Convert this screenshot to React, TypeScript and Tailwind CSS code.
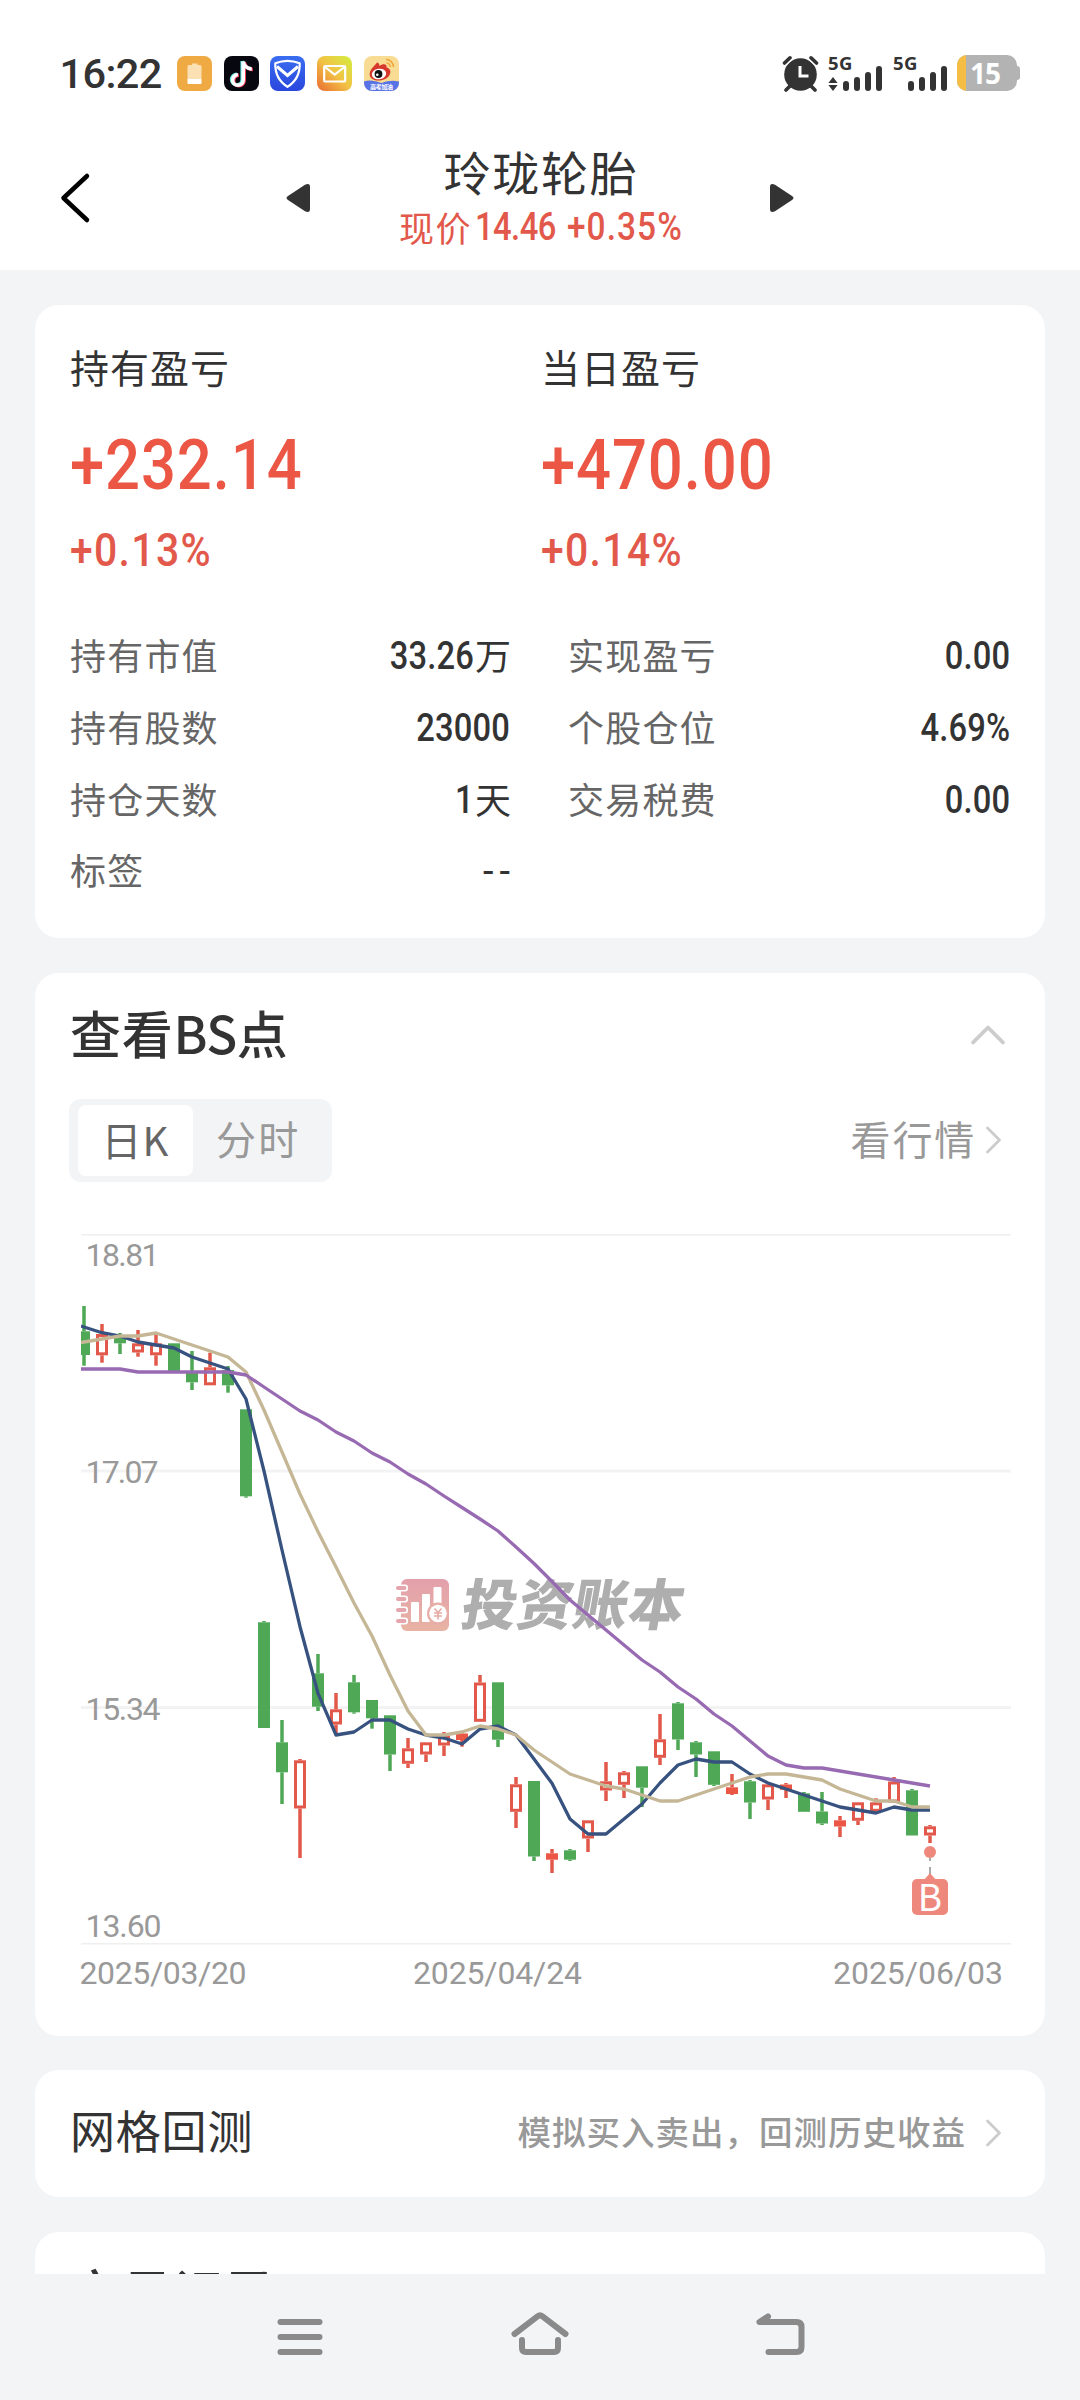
import React from "react";

type Candle = {
  up: boolean;
  filled?: boolean;
  high: number;
  top: number;
  bottom: number;
  low: number;
};

const G = (high: number, top: number, bottom: number, low: number): Candle => ({ up: false, high, top, bottom, low });
const R = (high: number, top: number, bottom: number, low: number): Candle => ({ up: true, high, top, bottom, low });
const F = (high: number, top: number, bottom: number, low: number): Candle => ({ up: true, filled: true, high, top, bottom, low });

const candles: Candle[] = [
  G(1306, 1331.3, 1355, 1365.7),
  R(1324, 1334, 1355.3, 1362.7),
  G(1333, 1336.5, 1343.3, 1354),
  R(1330, 1343.3, 1352.5, 1356.7),
  R(1334, 1343.3, 1355.3, 1365.7),
  G(1343.3, 1343.3, 1371.3, 1371.3),
  G(1351, 1372, 1382.3, 1390),
  R(1352.7, 1367.3, 1385.3, 1385.3),
  G(1366, 1370, 1385.3, 1392.7),
  G(1409.3, 1409.3, 1496.3, 1497.7),
  G(1621, 1622.3, 1728, 1728),
  G(1720, 1742.3, 1772.3, 1804),
  R(1759, 1760.3, 1808.5, 1858),
  G(1654, 1673.3, 1706.7, 1711),
  R(1693, 1709.3, 1724.5, 1733),
  G(1675, 1682.3, 1712.3, 1713.7),
  G(1700, 1700, 1718.3, 1728.7),
  G(1715.3, 1715.3, 1754.5, 1771),
  R(1738, 1748.3, 1763.8, 1768),
  R(1742.3, 1742.3, 1754.5, 1762),
  R(1732, 1735.3, 1745.5, 1756),
  F(1731.7, 1733.5, 1740, 1746.7),
  R(1675, 1682.5, 1721.8, 1721.8),
  G(1682.3, 1682.3, 1739.7, 1747),
  R(1777, 1784.3, 1811.8, 1828),
  G(1781, 1781, 1856.5, 1861),
  F(1849, 1853.3, 1859.7, 1873),
  G(1849, 1850.3, 1859.7, 1861),
  R(1820.3, 1820.3, 1838.5, 1852),
  R(1762, 1781.3, 1790.5, 1801),
  R(1771, 1772.3, 1784.8, 1798),
  G(1766.3, 1766.3, 1787.7, 1807),
  R(1714, 1739.3, 1757.8, 1765),
  G(1702, 1703.3, 1739.5, 1750),
  G(1741, 1742.3, 1754.5, 1777),
  G(1751.3, 1751.3, 1784.8, 1786),
  F(1774, 1787.3, 1794, 1795),
  G(1780, 1781.3, 1802.5, 1819),
  R(1784.3, 1784.3, 1799.5, 1810),
  F(1783, 1784.5, 1789.8, 1798),
  G(1792, 1793.3, 1811.8, 1811.8),
  G(1792, 1811.5, 1823.5, 1825),
  F(1816, 1820.3, 1826.5, 1837),
  R(1802.3, 1802.3, 1820.8, 1825),
  R(1798.3, 1802.3, 1811.8, 1811.8),
  R(1777, 1781.5, 1802.5, 1802.5),
  G(1789, 1790.3, 1835.5, 1835.5),
  R(1825, 1826.3, 1835.5, 1843),
];

const ma5 = [
  1327, 1332.7, 1336, 1342, 1345, 1348, 1357, 1363, 1369, 1399, 1471, 1550, 1626.7, 1693.3, 1735, 1732,
  1720, 1720, 1729, 1735, 1738, 1744, 1729, 1726, 1735, 1759, 1783.3, 1819, 1834, 1834, 1819, 1804, 1783,
  1765, 1759, 1762, 1762, 1774, 1783, 1789, 1795, 1801, 1807, 1810, 1813, 1807, 1810, 1810,
];
const ma10 = [
  1342, 1339, 1336, 1336, 1333, 1339, 1345, 1351, 1357, 1372, 1410, 1452, 1494, 1531.7, 1567, 1603, 1636,
  1675, 1711, 1735, 1735, 1732, 1726, 1729, 1735, 1750, 1762, 1774, 1780, 1786, 1789, 1795, 1801, 1801,
  1795, 1789, 1783, 1777, 1774, 1774, 1777, 1780, 1789, 1795, 1801, 1801, 1807, 1807,
];
const ma20 = [
  1369, 1369, 1369, 1372, 1372, 1372, 1372, 1372, 1372, 1375, 1387, 1399, 1411, 1420, 1432, 1441, 1453,
  1462, 1474, 1484, 1496, 1507.5, 1519, 1531, 1547, 1563.5, 1581.5, 1600, 1615, 1630, 1645, 1660, 1672,
  1687, 1699, 1714, 1726, 1741, 1756, 1765, 1768, 1768, 1771, 1774, 1777, 1780, 1783, 1786,
];

const FIRST_X = 84;
const STEP = 18;
const xAt = (i: number) => FIRST_X + STEP * i;

function linePoints(start: number, values: number[]) {
  return [`81,${start}`, ...values.map((v, i) => `${xAt(i)},${v}`)].join(" ");
}

function CandleMark({ c, x }: { c: Candle; x: number }) {
  const color = c.up ? "#e2594b" : "#4ea856";
  const hollow = c.up && !c.filled;
  return (
    <g>
      {c.high < c.top && <rect x={x - 1.75} y={c.high} width={3.5} height={c.top - c.high} fill={color} />}
      {c.low > c.bottom && <rect x={x - 1.75} y={c.bottom} width={3.5} height={c.low - c.bottom} fill={color} />}
      {hollow ? (
        <rect x={x - 4.5} y={c.top + 1.5} width={9} height={c.bottom - c.top - 3} fill="#fff" stroke={color} strokeWidth={3} />
      ) : (
        <rect x={x - 6} y={c.top} width={12} height={c.bottom - c.top} fill={c.up ? "#ec5645" : color} />
      )}
    </g>
  );
}

function Watermark() {
  return (
    <g>
      <defs>
        <linearGradient id="wm" x1="0" y1="0" x2="0" y2="1">
          <stop offset="0" stopColor="#e3a0ac" />
          <stop offset="1" stopColor="#e8b3a3" />
        </linearGradient>
      </defs>
      <rect x="401" y="1579" width="48" height="52" rx="6" fill="url(#wm)" />
      {[1585.5, 1596.5, 1607.5, 1618.5].map((y) => (
        <g key={y}>
          <rect x="398" y={y - 1} width="10" height="7" rx="3" fill="#fff" />
          <rect x="396" y={y + 0.5} width="10.5" height="4" rx="2" fill="#e4a5ac" />
        </g>
      ))}
      <rect x="411" y="1602" width="8" height="20" rx="1" fill="#fff" />
      <rect x="422" y="1594" width="8" height="28" rx="1" fill="#fff" />
      <rect x="433.5" y="1587" width="8" height="20" rx="1" fill="#fff" />
      <circle cx="438" cy="1613.5" r="11" fill="#e7aca5" />
      <circle cx="438" cy="1613.5" r="8.8" fill="#fff" />
      <path d="M434.5 1608.5l3.5 4 3.5-4M438 1612.5v7M434 1613h8M434 1616h8" stroke="#e7aca5" strokeWidth="1.6" fill="none" />
      <text
        transform="translate(459 1625) skewX(-10)"
        fontSize="55"
        fontWeight="900"
        textLength="222"
        fill="#aeaeae"
        fontFamily="'Noto Sans CJK SC', sans-serif"
      >
        投资账本
      </text>
    </g>
  );
}

function Chart() {
  const label = { fontSize: 32, fill: "#999999", fontFamily: "Roboto, sans-serif" };
  return (
    <svg className="block h-[854px] w-[1010px]" viewBox="35 1182 1010 854">
      <defs>
        <clipPath id="plot">
          <rect x="81" y="1230" width="930" height="720" />
        </clipPath>
      </defs>
      <rect x="81" y="1234" width="930" height="1.5" fill="#efefef" />
      <rect x="81" y="1469.5" width="930" height="3" fill="#f3f3f3" />
      <rect x="81" y="1706" width="930" height="3" fill="#f3f3f3" />
      <rect x="81" y="1943" width="930" height="1.5" fill="#efefef" />
      <text x="85.500" y="1266" textLength="74" {...label}>18.81</text>
      <text x="85.500" y="1483" textLength="73" {...label}>17.07</text>
      <text x="85.500" y="1720" textLength="75" {...label}>15.34</text>
      <text x="85.500" y="1937" textLength="76" {...label}>13.60</text>
      <text x="79.5" y="1984" textLength="167" {...label}>2025/03/20</text>
      <text x="413" y="1984" textLength="169" {...label}>2025/04/24</text>
      <text x="833" y="1984" textLength="170" {...label}>2025/06/03</text>
      <Watermark />
      <g clipPath="url(#plot)">
        {candles.map((c, i) => (
          <CandleMark key={i} c={c} x={xAt(i)} />
        ))}
        <g fill="none" strokeWidth="3.300" strokeLinejoin="round">
          <polyline points={linePoints(1326, ma5)} stroke="#37527f" />
          <polyline points={linePoints(1342.5, ma10)} stroke="#c5b796" />
          <polyline points={linePoints(1369, ma20)} stroke="#976ab2" />
        </g>
      </g>
      <circle cx="930" cy="1852" r="6" fill="#ee887c" />
      <path d="M930 1858v3M930 1867v7" stroke="#aaa" strokeWidth="2" />
      <path d="M924 1880l6-7 6 7z" fill="#ee887c" />
      <rect x="912" y="1879" width="36" height="36" rx="5" fill="#ee887c" />
      <text x="930" y="1911" textAnchor="middle" fontSize="37" fill="#fff" fontFamily="'Noto Sans CJK SC', sans-serif">B</text>
    </svg>
  );
}

function Num({ children, className = "" }: { children: React.ReactNode; className?: string }) {
  return (
    <span className={"inline-block whitespace-nowrap font-[Roboto,sans-serif] " + className}>{children}</span>
  );
}

const ChevronRight = () => (
  <svg className="h-[28px] w-[18px]" viewBox="0 0 18 28" fill="none">
    <path d="M2.5 2l12 12-12 12" stroke="#cccccc" strokeWidth="2.8" strokeLinecap="round" strokeLinejoin="round" />
  </svg>
);

function SignalBars() {
  return (
    <div className="flex h-[25px] items-end gap-[4.5px]">
      <i className="h-[10px] w-[6.5px] rounded-[3px] bg-[#333]" />
      <i className="h-[14px] w-[6.5px] rounded-[3px] bg-[#333]" />
      <i className="h-[19px] w-[6.5px] rounded-[3px] bg-[#333]" />
      <i className="h-[25px] w-[6.5px] rounded-[3px] bg-[#333]" />
    </div>
  );
}

function Signal({ arrows }: { arrows?: boolean }) {
  return (
    <div className="relative flex h-[36px] w-[54px] items-end justify-end">
      <span className="absolute top-[-1px] left-0 font-['Open_Sans',sans-serif] text-[18.500px] leading-[17px] font-bold tracking-[0.4px] text-[#333]">
        5G
      </span>
      {arrows && (
        <svg className="absolute bottom-0 left-0 h-[14px] w-[10px]" viewBox="0 0 10 14" fill="#333">
          <path d="M5 0l4.6 6H.4zM5 14L.4 8h9.200z" />
        </svg>
      )}
      <SignalBars />
    </div>
  );
}

function AppIcons() {
  return (
    <div className="flex gap-[11.700px]">
      <svg className="size-[35px]" viewBox="0 0 35 35">
        <rect width="35" height="35" rx="8" fill="#f0aa44" />
        <path d="M15 7.500h5.500v1.500h2.500a1.500 1.500 0 0 1 1.500 1.500V23h-14V10.500A1.500 1.500 0 0 1 12 9h3z" fill="#fae0b2" />
        <path d="M10.500 23h14v4a1 1 0 0 1-1 1h-12a1 1 0 0 1-1-1z" fill="#fff" />
      </svg>
      <svg className="size-[35px]" viewBox="0 0 35 35" fill="none" strokeWidth="3.600">
        <rect width="35" height="35" rx="8" fill="#07070f" />
        <path d="M18.200 5v18.500a5.300 5.300 0 1 1-5.300-5.300M18.200 5c.6 4 4 7.500 8.600 7.500" stroke="#5fe3e0" />
        <path d="M20.200 6v18.500a5.300 5.300 0 1 1-5.300-5.300M20.200 6c.6 4 4 7.500 8.600 7.500" stroke="#f2405c" />
        <path d="M19.200 5.500V24a5.300 5.300 0 1 1-5.300-5.300M19.200 5.500c.6 4 4 7.500 8.600 7.500" stroke="#fff" />
      </svg>
      <svg className="size-[35px]" viewBox="0 0 35 35" fill="none">
        <defs>
          <linearGradient id="sh" x1="0" y1="0" x2="0" y2="1">
            <stop offset="0" stopColor="#3a6df0" />
            <stop offset="1" stopColor="#2a47dd" />
          </linearGradient>
        </defs>
        <rect width="35" height="35" rx="8" fill="url(#sh)" />
        <path d="M17.500 4.800c4 0 8 .8 12.200 2.500.3 10-3.200 18-12.200 23.500C8.500 25.300 5 17.300 5.300 7.300c4.200-1.700 8.200-2.500 12.200-2.500z" stroke="#fff" strokeWidth="2.200" strokeLinejoin="round" />
        <path d="M7 10.500l10.500 9 10.500-9" stroke="#fff" strokeWidth="3" />
      </svg>
      <svg className="size-[35px]" viewBox="0 0 35 35" fill="none">
        <defs>
          <linearGradient id="ml" x1="1" y1="0" x2="0" y2="1">
            <stop offset="0" stopColor="#d3ee3f" />
            <stop offset="0.500" stopColor="#f2c244" />
            <stop offset="1" stopColor="#e96a33" />
          </linearGradient>
        </defs>
        <rect width="35" height="35" rx="8" fill="url(#ml)" />
        <rect x="7.200" y="10" width="21" height="15.500" rx="1" stroke="#fff" strokeWidth="2.200" />
        <path d="M8 11l9.700 7.500L27.500 11" stroke="#fff" strokeWidth="2.200" />
      </svg>
      <svg className="size-[35px]" viewBox="0 0 35 35">
        <defs>
          <clipPath id="wbc">
            <rect width="35" height="35" rx="8" />
          </clipPath>
        </defs>
        <g clipPath="url(#wbc)">
          <rect width="35" height="35" fill="#f8dc94" />
          <path d="M0 25.500c6-2 11-.500 17.500 1.500 6-2 11-3 17.500-1.500V35H0z" fill="#5873e6" />
          <path d="M13 6.500c2 .500 2.500 2 2.500 3.500 3-2.500 8-2.500 7 1.500 3.500.500 5 4 3 7.500-2 4-7 5.500-11.500 5.500-5 0-9-3-8.300-7.300C6.500 12.500 11 9.500 13 6.500z" fill="#d8372c" />
          <ellipse cx="15" cy="18" rx="7.200" ry="5.300" fill="#fff" transform="rotate(-8 15 18)" />
          <circle cx="14.500" cy="18" r="3.900" fill="#111" />
          <circle cx="13.300" cy="18.800" r="1.300" fill="#fff" />
          <path d="M22 3.500a7.500 7.500 0 0 1 7.500 7.500M22.500 7a4 4 0 0 1 3.800 4" stroke="#eea53c" strokeWidth="1.600" fill="none" />
          <text x="17.500" y="33" fontSize="6.200" fontWeight="700" fill="#fff" textAnchor="middle" textLength="23" fontFamily="'Noto Sans CJK SC', sans-serif">
            高考加油
          </text>
        </g>
      </svg>
    </div>
  );
}

function StatusBar() {
  return (
    <div className="flex h-[146px] shrink-0 items-center justify-between pr-[60px] pl-[59.500px]">
      <div className="flex items-center">
        <span className="mt-[1px] w-[117.500px] font-[Roboto,sans-serif] text-[41.5px] leading-[40px] font-medium tracking-[-0.6px] text-[#333]">16:22</span>
        <AppIcons />
      </div>
      <div className="flex items-center">
        <svg className="mr-[9px] h-[37px] w-[37px]" viewBox="0 0 37 37">
          <circle cx="18.500" cy="19.500" r="16.300" fill="#333" />
          <path d="M8 32l-4 4M29 32l4 4M1.500 8.500L8 2.500M35.500 8.500L29 2.500" stroke="#fff" strokeWidth="7" />
          <path d="M8 31l-4 4M29 31l4 4M2.500 8L8 2.800M34.500 8L29 2.800" stroke="#333" strokeWidth="3.600" strokeLinecap="round" />
          <path d="M18 11v10h8.500" stroke="#fff" strokeWidth="3" fill="none" />
        </svg>
        <Signal arrows />
        <div className="w-[11px]" />
        <Signal />
        <div className="ml-[10px] flex items-center">
          <div className="flex h-[36px] w-[60px] items-center overflow-hidden rounded-[10px] bg-[#b3b3b3]">
            <div className="h-full w-[9px] bg-[#f5bd44]" />
            <span className="ml-[4px] font-['Open_Sans',sans-serif] text-[28px] leading-[36px] font-bold tracking-[-1px] text-white">15</span>
          </div>
          <div className="h-[14px] w-[3px] rounded-r-[3px] bg-[#b3b3b3]" />
        </div>
      </div>
    </div>
  );
}

function Header() {
  return (
    <div className="flex h-[124px] shrink-0 items-start">
      <svg className="mt-[26px] ml-[59px] h-[52px] w-[32px]" viewBox="0 0 32 52" fill="none">
        <path d="M28 4L4.500 26l23.500 22" stroke="#000" strokeWidth="4.500" strokeLinecap="round" strokeLinejoin="round" />
      </svg>
      <svg className="mt-[37px] ml-[195px] h-[30px] w-[24px]" viewBox="0 0 24 30">
        <path d="M2 13L19 1.800Q24 -.5 24 4v22q0 4.500-5 2.200L2 17q-3-2 0-4z" fill="#333" />
      </svg>
      <div className="flex w-[460px] flex-col items-center">
        <h1 className="pt-[1px] pl-[2px] text-[47px] leading-[47px] tracking-[1.700px] text-[#333]">玲珑轮胎</h1>
        <div className="mt-[5px] flex h-[56px] items-center text-[#e2594b]">
          <span className="w-[76px] text-[35px] leading-[50px] tracking-[1.500px]">现价</span>
          <Num className="w-[92px] origin-left scale-x-[.86] text-[38px] font-medium tracking-[-0.600px]">14.46</Num>
          <Num className="w-[114px] origin-left scale-x-[.88] text-[38px] font-medium tracking-[1.200px]">+0.35%</Num>
        </div>
      </div>
      <svg className="mt-[37px] h-[30px] w-[24px] rotate-180" viewBox="0 0 24 30">
        <path d="M2 13L19 1.800Q24 -.5 24 4v22q0 4.500-5 2.200L2 17q-3-2 0-4z" fill="#333" />
      </svg>
    </div>
  );
}

function Profit({ label, value, pct }: { label: string; value: string; pct: string }) {
  return (
    <div className="flex flex-col items-start">
      <span className="text-[39px] leading-[40px] tracking-[1px] text-[#333]">{label}</span>
      <Num className="mt-[49px] origin-left scale-x-[.88] text-[70px] leading-[60px] font-medium tracking-[1px] text-[#ec5645]">{value}</Num>
      <Num className="mt-[35px] origin-left scale-x-[.88] text-[46.500px] leading-[40px] font-medium tracking-[1.500px] text-[#e2594b]">{pct}</Num>
    </div>
  );
}

function Row({ label, value, unit }: { label: string; value: string; unit?: string }) {
  const empty = value === "--";
  return (
    <div className="flex h-[71.700px] items-center justify-between">
      <span className="mt-[-3px] text-[36px] leading-[50px] tracking-[1.200px] text-[#666]">{label}</span>
      <span className="flex items-center text-[#333]">
        {empty ? (
          <Num className="mr-[-6px] text-[38px] leading-[50px] tracking-[6px]">{value}</Num>
        ) : (
          <Num className="mt-[1px] origin-right scale-x-[.86] text-[38px] leading-[50px] font-medium tracking-[0.200px]">{value}</Num>
        )}
        {unit && <span className="mt-[-3px] mr-[-1px] ml-[1px] text-[36px] leading-[50px]">{unit}</span>}
      </span>
    </div>
  );
}

function SummaryCard() {
  return (
    <section className="mt-[35px] h-[633px] shrink-0 rounded-[24px] bg-white pt-[41px] pr-[34px] pl-[35px]">
      <div className="grid grid-cols-[471px_1fr]">
        <Profit label="持有盈亏" value="+232.14" pct="+0.13%" />
        <Profit label="当日盈亏" value="+470.00" pct="+0.14%" />
      </div>
      <div className="mt-[50px] grid grid-cols-[440px_442px] gap-x-[58px]">
        <Row label="持有市值" value="33.26" unit="万" />
        <Row label="实现盈亏" value="0.00" />
        <Row label="持有股数" value="23000" />
        <Row label="个股仓位" value="4.69%" />
        <Row label="持仓天数" value="1" unit="天" />
        <Row label="交易税费" value="0.00" />
        <Row label="标签" value="--" />
      </div>
    </section>
  );
}

function ChartCard() {
  return (
    <section className="mt-[35px] h-[1063px] shrink-0 overflow-hidden rounded-[24px] bg-white pt-[29px]">
      <div className="flex h-[60px] items-center justify-between pr-[38px] pl-[35px]">
        <h2 className="text-[51px] leading-[60px] font-medium tracking-[0.800px] text-[#333]">
          查看<span className="tracking-[-0.500px]">BS</span>点
        </h2>
        <svg className="mt-[6px] h-[22px] w-[38px]" viewBox="0 0 38 22" fill="none">
          <path d="M4 18.500L19 3.500l15 15" stroke="#cccccc" strokeWidth="3.800" strokeLinecap="round" strokeLinejoin="round" />
        </svg>
      </div>
      <div className="mt-[37px] flex h-[83px] items-center justify-between pr-[42px] pl-[34px]">
        <div className="flex h-full w-[263px] items-center rounded-[12px] bg-[#f3f4f6] pl-[9px]">
          <div className="flex h-[71px] w-[115px] items-center justify-center rounded-[8px] bg-white pb-[4px] text-[40px] tracking-[1px] text-[#666]">
            日K
          </div>
          <span className="mt-[-5px] ml-[23px] text-[40px] tracking-[2.200px] text-[#999]">分时</span>
        </div>
        <div className="flex items-center">
          <span className="mt-[-5px] text-[40px] leading-[50px] tracking-[1.800px] text-[#999]">看行情</span>
          <div className="mt-[-2px] ml-[9px]">
            <ChevronRight />
          </div>
        </div>
      </div>
      <Chart />
    </section>
  );
}

function BottomNav() {
  return (
    <nav className="flex h-[126px] shrink-0 items-start justify-center bg-[#f3f4f6] pt-[34px]">
      <svg className="h-[56px] w-[240px]" viewBox="0 0 240 56">
        <path d="M100.500 14h39M100.500 29h39M100.500 44h39" stroke="#8a8a8a" strokeWidth="6" strokeLinecap="round" />
      </svg>
      <svg className="h-[56px] w-[240px]" viewBox="0 0 240 56" fill="none">
        <path d="M94.500 26L117.500 8.300q2.500-1.900 5 0L145.500 26" stroke="#8a8a8a" strokeWidth="6" strokeLinecap="round" />
        <path d="M102 32v8q0 4 4 4h28q4 0 4-4v-8" stroke="#8a8a8a" strokeWidth="6" strokeLinecap="round" />
      </svg>
      <svg className="h-[56px] w-[240px]" viewBox="0 0 240 56" fill="none">
        <path d="M108 8.500L99.500 14H136.500q5 0 5 5v20q0 5-5 5h-28" stroke="#8a8a8a" strokeWidth="6" strokeLinecap="round" strokeLinejoin="round" />
      </svg>
    </nav>
  );
}

export default function App() {
  return (
    <div className="flex h-[2400px] w-[1080px] flex-col overflow-hidden bg-[#f3f4f6] font-['Noto_Sans_CJK_SC',sans-serif]">
      <div className="shrink-0 bg-white">
        <StatusBar />
        <Header />
      </div>
      <main className="flex min-h-0 flex-1 flex-col overflow-hidden px-[35px]">
        <SummaryCard />
        <ChartCard />
        <section className="mt-[34px] flex h-[127px] shrink-0 items-center justify-between rounded-[24px] bg-white pr-[42px] pl-[35px]">
          <span className="mt-[-8px] text-[45px] leading-[60px] tracking-[0.800px] text-[#333]">网格回测</span>
          <div className="flex items-center">
            <span className="mt-[-6px] text-[33.500px] leading-[50px] font-medium tracking-[1px] text-[#999]">模拟买入卖出，回测历史收益</span>
            <div className="mt-[-2px] ml-[19px]">
              <ChevronRight />
            </div>
          </div>
        </section>
        <section className="mt-[35px] h-[200px] shrink-0 rounded-[24px] bg-white pt-[29px] pl-[35px]">
          <h2 className="text-[51px] leading-[60px] font-medium tracking-[0.500px] text-[#333]">交易记录</h2>
        </section>
      </main>
      <BottomNav />
    </div>
  );
}
